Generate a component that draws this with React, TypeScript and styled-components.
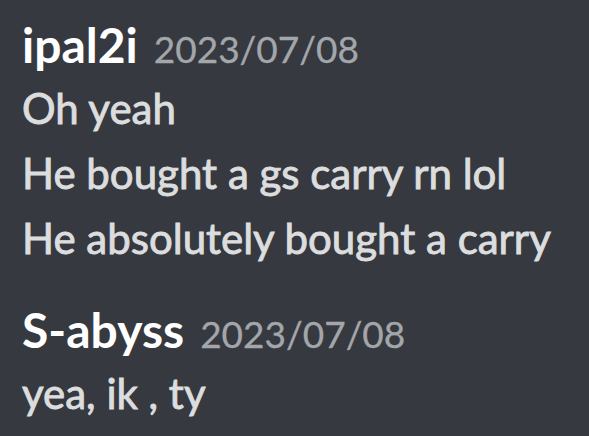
import styled, { createGlobalStyle } from 'styled-components';

const GlobalStyle = createGlobalStyle`
    html, body {
        margin: 0;
        padding: 0;
        background-color: #36393f;
    }
`;

const Chat = styled.div`
    width: 589px;
    height: 436px;
    box-sizing: border-box;
    padding: 14px 0 0 22px;
    background-color: #36393f;
    font-family: Lato, "Noto Sans", sans-serif;
    overflow: hidden;
    display: flex;
    flex-direction: column;
    gap: 28px;
`;

const Group = styled.div`
    display: flex;
    flex-direction: column;
`;

const Header = styled.div`
    display: flex;
    align-items: baseline;
    gap: 16px;
    height: 62px;
`;

const Username = styled.span`
    color: #ffffff;
    font-size: 48px;
    font-weight: 700;
    line-height: 62px;
`;

const Timestamp = styled.span`
    color: #a3a6aa;
    font-size: 37px;
    font-weight: 400;
    line-height: 62px;
    -webkit-text-stroke: 0.3px #a3a6aa;
`;

const Line = styled.div`
    color: #dcddde;
    font-size: 42px;
    font-weight: 400;
    line-height: 65px;
    white-space: nowrap;
    -webkit-text-stroke: 0.9px #dcddde;
`;

const messages = [
    { author: 'ipal2i', date: '2023/07/08', lines: ['Oh yeah', 'He bought a gs carry rn lol', 'He absolutely bought a carry'] },
    { author: 'S-abyss', date: '2023/07/08', lines: ['yea, ik , ty'] },
];

export default function App() {
    return (
        <>
            <GlobalStyle />
            <Chat>
                {messages.map(m => (
                    <Group key={m.author}>
                        <Header>
                            <Username>{m.author}</Username>
                            <Timestamp>{m.date}</Timestamp>
                        </Header>
                        {m.lines.map(l => <Line key={l}>{l}</Line>)}
                    </Group>
                ))}
            </Chat>
        </>
    );
}
